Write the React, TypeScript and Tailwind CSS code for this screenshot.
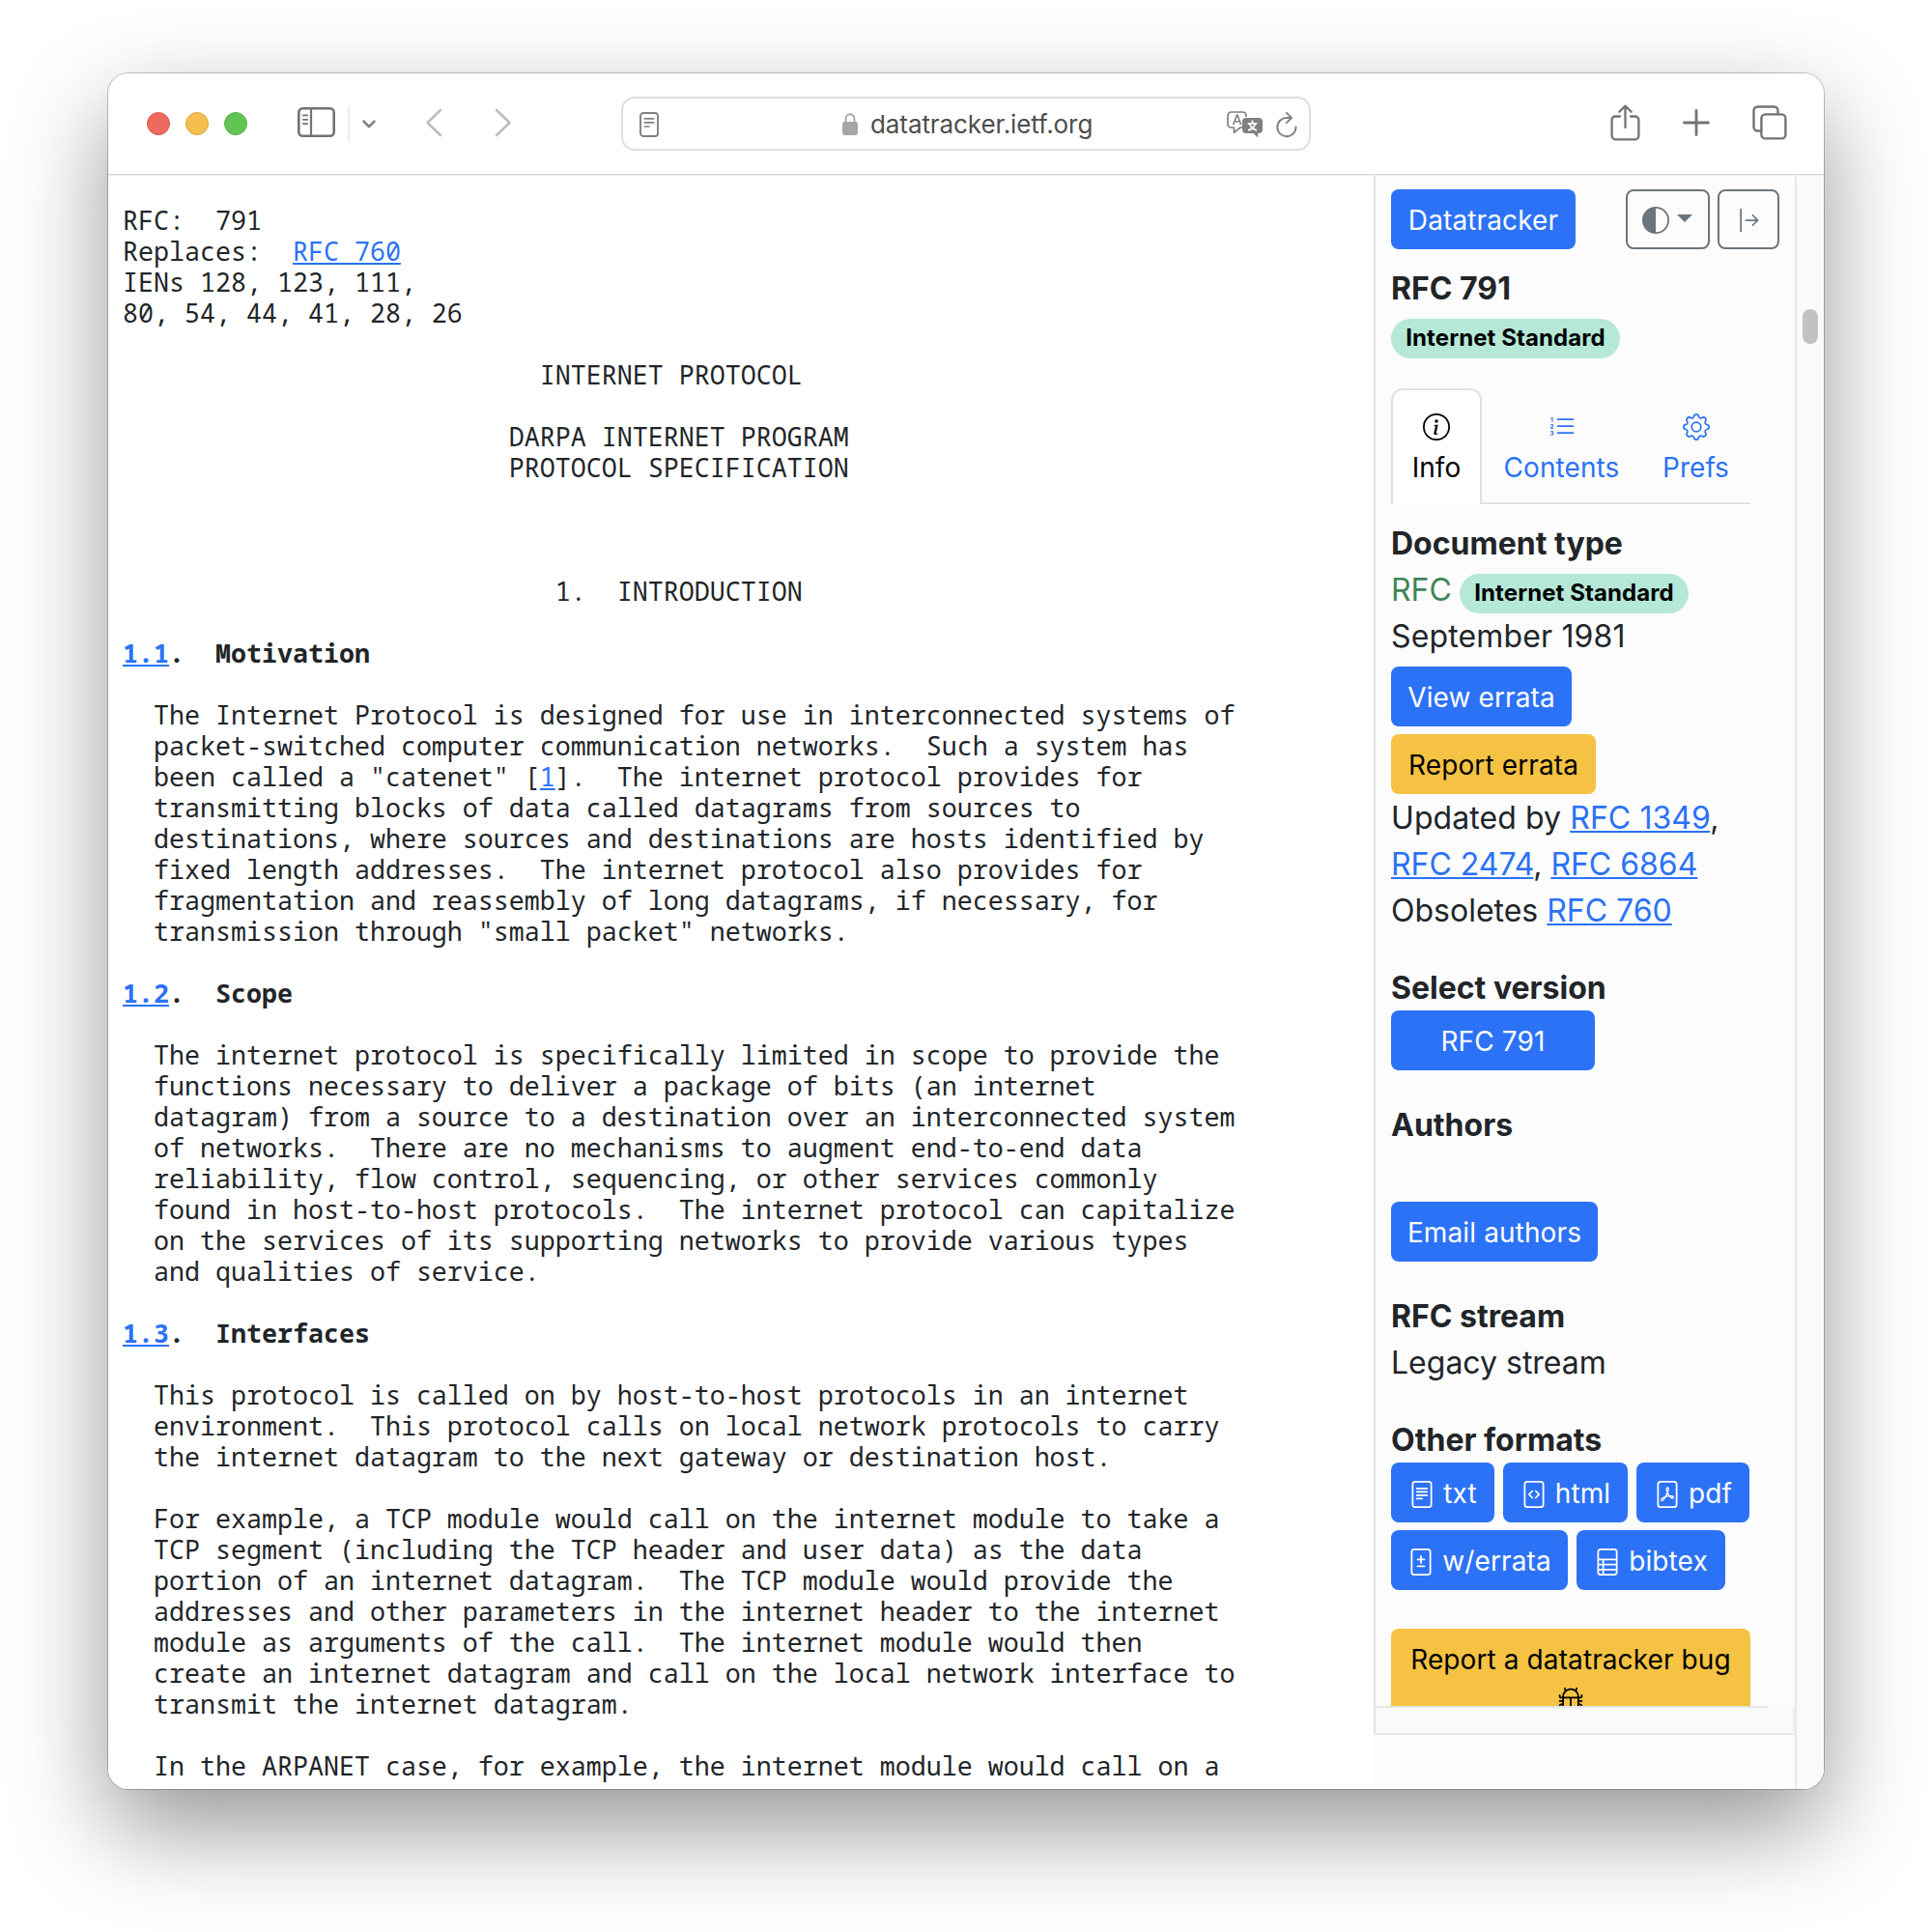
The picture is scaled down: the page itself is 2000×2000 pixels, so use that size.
import type { ReactNode } from "react";
import {
  BsArrowBarRight,
  BsBug,
  BsCircleHalf,
  BsFileCode,
  BsFileDiff,
  BsFilePdf,
  BsFileRuled,
  BsFileText,
  BsGear,
  BsInfoCircle,
  BsListOl,
} from "react-icons/bs";

function A({ children }: { children: ReactNode }) {
  return (
    <a className="text-[#2b72f6] underline decoration-2 underline-offset-[2px] [text-decoration-skip-ink:none]">
      {children}
    </a>
  );
}

function Btn({
  children,
  className = "",
  tone = "bg-[#2c72f6] text-white",
}: {
  children: ReactNode;
  className?: string;
  tone?: string;
}) {
  return (
    <button
      className={`flex h-[62px] shrink-0 items-center justify-center gap-2 whitespace-nowrap rounded-lg pt-[2px] text-[28px] leading-[42px] tracking-[0.12px] ${tone} ${className}`}
    >
      {children}
    </button>
  );
}

function Line({ children, className = "" }: { children: ReactNode; className?: string }) {
  return <div className={`h-[48px] shrink-0 whitespace-nowrap leading-[50px] ${className}`}>{children}</div>;
}

function Badge() {
  return (
    <span className="flex h-[41px] w-[237px] items-center justify-center rounded-full bg-[#b5e8d7] pb-[2px] text-[24px] font-bold leading-none tracking-[0.08px] text-black">
      Internet Standard
    </span>
  );
}

function Toolbar() {
  return (
    <div className="flex h-[105px] shrink-0 items-center border-b border-[#d6d6d6] bg-white pb-[3px]">
      <div className="ml-[40px] flex gap-4 pt-[3px]">
        <span className="size-6 rounded-full border border-[#d8574d] bg-[#ed6a5e]" />
        <span className="size-6 rounded-full border border-[#dba444] bg-[#f5bf4f]" />
        <span className="size-6 rounded-full border border-[#53ad45] bg-[#61c554]" />
      </div>
      <svg className="ml-[52px]" width="39" height="31" viewBox="0 0 39 31" fill="none" stroke="#737373" strokeLinecap="round">
        <rect x="1.3" y="1.3" width="36.4" height="28.4" rx="4" strokeWidth="2.6" />
        <path d="M14 1.5v28" strokeWidth="2.2" strokeLinecap="butt" />
        <path d="M5.8 8.4h4.4M5.8 12.8h4.4M5.8 17.2h4.4" strokeWidth="1.7" />
      </svg>
      <span className="ml-[13px] mt-[2px] h-9 w-[2px] bg-[#ececec]" />
      <svg className="ml-[12px] mt-[2px]" width="16" height="12" viewBox="0 0 16 12" fill="none" stroke="#808080" strokeWidth="2.6" strokeLinecap="round" strokeLinejoin="round">
        <path d="M2.5 3.6 8 9.2l5.5-5.6" />
      </svg>
      <svg className="ml-[50px]" width="18" height="30" viewBox="0 0 18 30" fill="none" stroke="#bdbdbd" strokeWidth="2.6" strokeLinecap="round" strokeLinejoin="round">
        <path d="M16 2 2.5 15 16 28" />
      </svg>
      <svg className="ml-[54px]" width="18" height="30" viewBox="0 0 18 30" fill="none" stroke="#bdbdbd" strokeWidth="2.6" strokeLinecap="round" strokeLinejoin="round">
        <path d="M2 2 15.5 15 2 28" />
      </svg>
      <div className="ml-[113px] mt-[2px] flex h-[56px] w-[714px] items-center rounded-[14px] border-2 border-[#dfdfdf] bg-white">
        <svg className="ml-[17px] mt-[2px]" width="20" height="26" viewBox="0 0 20 26" fill="none" stroke="#808080" strokeLinecap="round">
          <rect x="1" y="1" width="18" height="24" rx="3" strokeWidth="1.9" />
          <path d="M5.3 6.8h9.4M5.3 10.8h9.4M5.3 15h4.7" strokeWidth="1.7" />
        </svg>
        <svg className="ml-[190px] mt-px" width="16" height="23" viewBox="0 0 16 23" fill="none">
          <path d="M3.5 10V6.200a4.500 4.900 0 0 1 9 0V10" stroke="#a6a6a6" strokeWidth="1.9" />
          <rect y="9" width="16" height="14" rx="2.4" fill="#a6a6a6" />
        </svg>
        <span className="ml-[13px] mt-[2px] w-[369px] whitespace-nowrap font-['Inter',sans-serif] text-[26px] leading-[36px] tracking-[-0.08px] text-[#4d4d4d]">
          datatracker.ietf.org
        </span>
        <svg className="mt-[2px]" width="38" height="28" viewBox="0 0 38 28" fill="none">
          <path
            d="M16.500 17H14l-6.500 5.200V17H4.500A3.500 3.500 0 0 1 1 13.500v-9A3.500 3.500 0 0 1 4.500 1h12A3.500 3.500 0 0 1 20 4.500V6"
            stroke="#808080"
            strokeWidth="1.7"
            strokeLinejoin="round"
          />
          <path d="M6.600 14 10.500 4h.4l3.900 10M8 10.800h5.400" stroke="#808080" strokeWidth="1.6" />
          <path
            d="M20 7h13a4 4 0 0 1 4 4v8a4 4 0 0 1-4 4h-.8v4.600L27.500 23H20a4 4 0 0 1-4-4v-8a4 4 0 0 1 4-4Z"
            fill="#808080"
          />
          <path d="M26.500 9.500v2.800M21.600 12.800h9.800M23.600 13c.8 3 3.600 6 7.400 6.800M29.400 13c-.8 3-3.600 6-7.400 6.800" stroke="#fff" strokeWidth="1.7" />
        </svg>
        <svg className="ml-[13px] mt-[2px]" width="22" height="28" viewBox="0 0 22 28" fill="none" stroke="#808080" strokeWidth="1.9" strokeLinecap="round" strokeLinejoin="round">
          <path d="M20.500 16.500A9.600 9.600 0 1 1 11 7h4.600M10.800 1.800 16 7l-5.200 5.200" />
        </svg>
      </div>
      <svg className="ml-[310px]" width="31" height="38" viewBox="0 0 31 38" fill="none" stroke="#737373" strokeWidth="2.3" strokeLinecap="round" strokeLinejoin="round">
        <path d="M10 12.500H5.200a3.600 3.600 0 0 0-3.600 3.600v16.600a3.600 3.600 0 0 0 3.600 3.600h20.600a3.600 3.600 0 0 0 3.600-3.600V16.100a3.600 3.600 0 0 0-3.600-3.600H21M15.500 24V2M9.300 7.800 15.500 1.600l6.200 6.200" />
      </svg>
      <svg className="ml-[43.5px]" width="28" height="28" viewBox="0 0 28 28" fill="none" stroke="#737373" strokeWidth="2.8" strokeLinecap="round">
        <path d="M14 1.500v25M1.500 14h25" />
      </svg>
      <svg className="ml-[44px]" width="36" height="36" viewBox="0 0 36 36" fill="none" stroke="#737373" strokeWidth="2.4">
        <rect x="9.4" y="9.4" width="25" height="25" rx="4" />
        <path d="M9 26.500H5.500a4 4 0 0 1-4-4v-17a4 4 0 0 1 4-4h17a4 4 0 0 1 4 4V9" />
      </svg>
    </div>
  );
}

function Rfc() {
  return (
    <pre className="h-full w-[1310px] shrink-0 overflow-hidden bg-white pl-[15px] pt-[30px] font-['Noto_Sans_Mono','DejaVu_Sans_Mono',monospace] text-[26.667px] leading-[32px] text-[#212529]">
      {"RFC:  791\nReplaces:  "}
      <A>RFC 760</A>
      {`
IENs 128, 123, 111,
80, 54, 44, 41, 28, 26

                           INTERNET PROTOCOL

                         DARPA INTERNET PROGRAM
                         PROTOCOL SPECIFICATION



                            1.  INTRODUCTION

`}
      <b>
        <A>1.1</A>
        {".  Motivation"}
      </b>
      {`

  The Internet Protocol is designed for use in interconnected systems of
  packet-switched computer communication networks.  Such a system has
  been called a "catenet" [`}
      <A>1</A>
      {`].  The internet protocol provides for
  transmitting blocks of data called datagrams from sources to
  destinations, where sources and destinations are hosts identified by
  fixed length addresses.  The internet protocol also provides for
  fragmentation and reassembly of long datagrams, if necessary, for
  transmission through "small packet" networks.

`}
      <b>
        <A>1.2</A>
        {".  Scope"}
      </b>
      {`

  The internet protocol is specifically limited in scope to provide the
  functions necessary to deliver a package of bits (an internet
  datagram) from a source to a destination over an interconnected system
  of networks.  There are no mechanisms to augment end-to-end data
  reliability, flow control, sequencing, or other services commonly
  found in host-to-host protocols.  The internet protocol can capitalize
  on the services of its supporting networks to provide various types
  and qualities of service.

`}
      <b>
        <A>1.3</A>
        {".  Interfaces"}
      </b>
      {`

  This protocol is called on by host-to-host protocols in an internet
  environment.  This protocol calls on local network protocols to carry
  the internet datagram to the next gateway or destination host.

  For example, a TCP module would call on the internet module to take a
  TCP segment (including the TCP header and user data) as the data
  portion of an internet datagram.  The TCP module would provide the
  addresses and other parameters in the internet header to the internet
  module as arguments of the call.  The internet module would then
  create an internet datagram and call on the local network interface to
  transmit the internet datagram.

  In the ARPANET case, for example, the internet module would call on a`}
    </pre>
  );
}

function Tab({ icon, label, className }: { icon: ReactNode; label: string; className: string }) {
  return (
    <div className={`flex flex-col items-center text-[28px] leading-[42px] ${className}`}>
      <span className="flex h-[43px] items-center">{icon}</span>
      <span>{label}</span>
    </div>
  );
}

function Sidebar() {
  return (
    <div className="flex h-full w-[436px] shrink-0 flex-col bg-[#fcfcfc] font-['Inter',sans-serif] text-[32px] text-[#212529]">
      <div className="flex h-[1584px] shrink-0 flex-col overflow-hidden border-l-2 border-[#dee2e6] px-4 pt-[14px]">
        <div className="flex shrink-0">
          <Btn className="w-[191px]">Datatracker</Btn>
          <div className="ml-[52px] flex h-[62px] w-[87px] items-center gap-2 rounded-lg border-2 border-[#6c757d] pl-[15px] text-[#6c757d]">
            <BsCircleHalf className="mt-[2px] size-7" />
            <span className="-mt-[2px] border-x-8 border-t-8 border-x-transparent border-t-[#6c757d]" />
          </div>
          <div className="ml-2 flex h-[62px] w-[64px] items-center justify-center rounded-lg border-2 border-[#6c757d] text-[#6c757d]">
            <BsArrowBarRight className="mt-[2px] size-7" />
          </div>
        </div>
        <Line className="mt-4 font-bold">RFC 791</Line>
        <div className="mt-2 shrink-0">
          <Badge />
        </div>
        <div className="mt-[31px] flex w-[372px] shrink-0 items-start border-b-2 border-[#dee2e6]">
          <Tab
            icon={<BsInfoCircle className="size-7" />}
            label="Info"
            className="-mb-[2px] h-[120px] w-[94px] rounded-t-xl border-2 border-b-0 border-[#dee2e6] bg-white pt-[16px] text-black"
          />
          <Tab icon={<BsListOl className="size-7" />} label="Contents" className="h-[118px] w-[165px] pt-[18px] tracking-[0.1px] text-[#2b72f6]" />
          <Tab icon={<BsGear className="size-7" />} label="Prefs" className="h-[118px] w-[113px] pt-[18px] text-[#2b72f6]" />
        </div>
        <Line className="mt-4 font-bold">Document type</Line>
        <div className="flex h-[48px] shrink-0">
          <Line className="w-[71px] text-[#3f8557]">RFC</Line>
          <span className="pt-2">
            <Badge />
          </span>
        </div>
        <Line className="tracking-[0.15px]">September 1981</Line>
        <Btn className="mt-2 w-[187px]">View errata</Btn>
        <Btn className="mt-2 w-[212px]" tone="bg-[#f5c243] text-black">
          Report errata
        </Btn>
        <Line className="tracking-[0.08px]">
          Updated by <A>RFC 1349</A>,
        </Line>
        <Line className="tracking-[-0.02px]">
          <A>RFC 2474</A>, <A>RFC 6864</A>
        </Line>
        <Line>
          Obsoletes <A>RFC 760</A>
        </Line>
        <Line className="mt-8 font-bold">Select version</Line>
        <Btn className="w-[211px]">RFC 791</Btn>
        <Line className="mt-8 font-bold">Authors</Line>
        <Btn className="mt-14 w-[214px]">Email authors</Btn>
        <Line className="mt-8 font-bold">RFC stream</Line>
        <Line>Legacy stream</Line>
        <Line className="mt-8 font-bold">Other formats</Line>
        <div className="flex shrink-0 gap-[9px]">
          <Btn className="w-[107px]">
            <BsFileText className="mt-[2px] size-7" />
            txt
          </Btn>
          <Btn className="w-[129px]">
            <BsFileCode className="mt-[2px] size-7" />
            html
          </Btn>
          <Btn className="w-[117px]">
            <BsFilePdf className="mt-[2px] size-7" />
            pdf
          </Btn>
        </div>
        <div className="mt-2 flex shrink-0 gap-[9px]">
          <Btn className="w-[183px]">
            <BsFileDiff className="mt-[2px] size-7" />
            w/errata
          </Btn>
          <Btn className="w-[154px]">
            <BsFileRuled className="mt-[2px] size-7" />
            bibtex
          </Btn>
        </div>
        <div className="mt-10 flex h-[104px] w-[372px] shrink-0 flex-col items-center rounded-lg bg-[#f5c243] pt-[11px] text-[28px] leading-[42px] tracking-[0.1px] text-black">
          Report a datatracker bug
          <BsBug className="mt-[7px] size-7 shrink-0" />
        </div>
      </div>
      <div className="flex h-[30px] shrink-0 flex-col border-x-2 border-b-2 border-b-[#e8e8e8] border-l-[#dee2e6] border-r-[#ededed] bg-[#fafafa]">
        <span className="h-[2px] w-[406px] bg-[#e6e6e6]" />
      </div>
    </div>
  );
}

export default function App() {
  return (
    <div className="flex h-[2000px] w-[2000px] items-start overflow-hidden bg-white pl-[112px] pt-[76px]">
      <div className="flex h-[1776px] w-[1776px] flex-col overflow-hidden rounded-[21px] bg-white shadow-[0_0_0_1px_rgba(0,0,0,0.22),0_40px_100px_rgba(0,0,0,0.42)]">
        <Toolbar />
        <div className="flex min-h-0 flex-1 bg-[#f0f0f0] pt-px">
          <Rfc />
          <Sidebar />
          <div className="h-full w-[30px] shrink-0 border-l-2 border-[#e8e8e8] bg-[#fafafa] pl-[6px] pt-[138px]">
            <div className="h-9 w-4 rounded-full bg-[#c2c2c2]" />
          </div>
        </div>
      </div>
    </div>
  );
}
